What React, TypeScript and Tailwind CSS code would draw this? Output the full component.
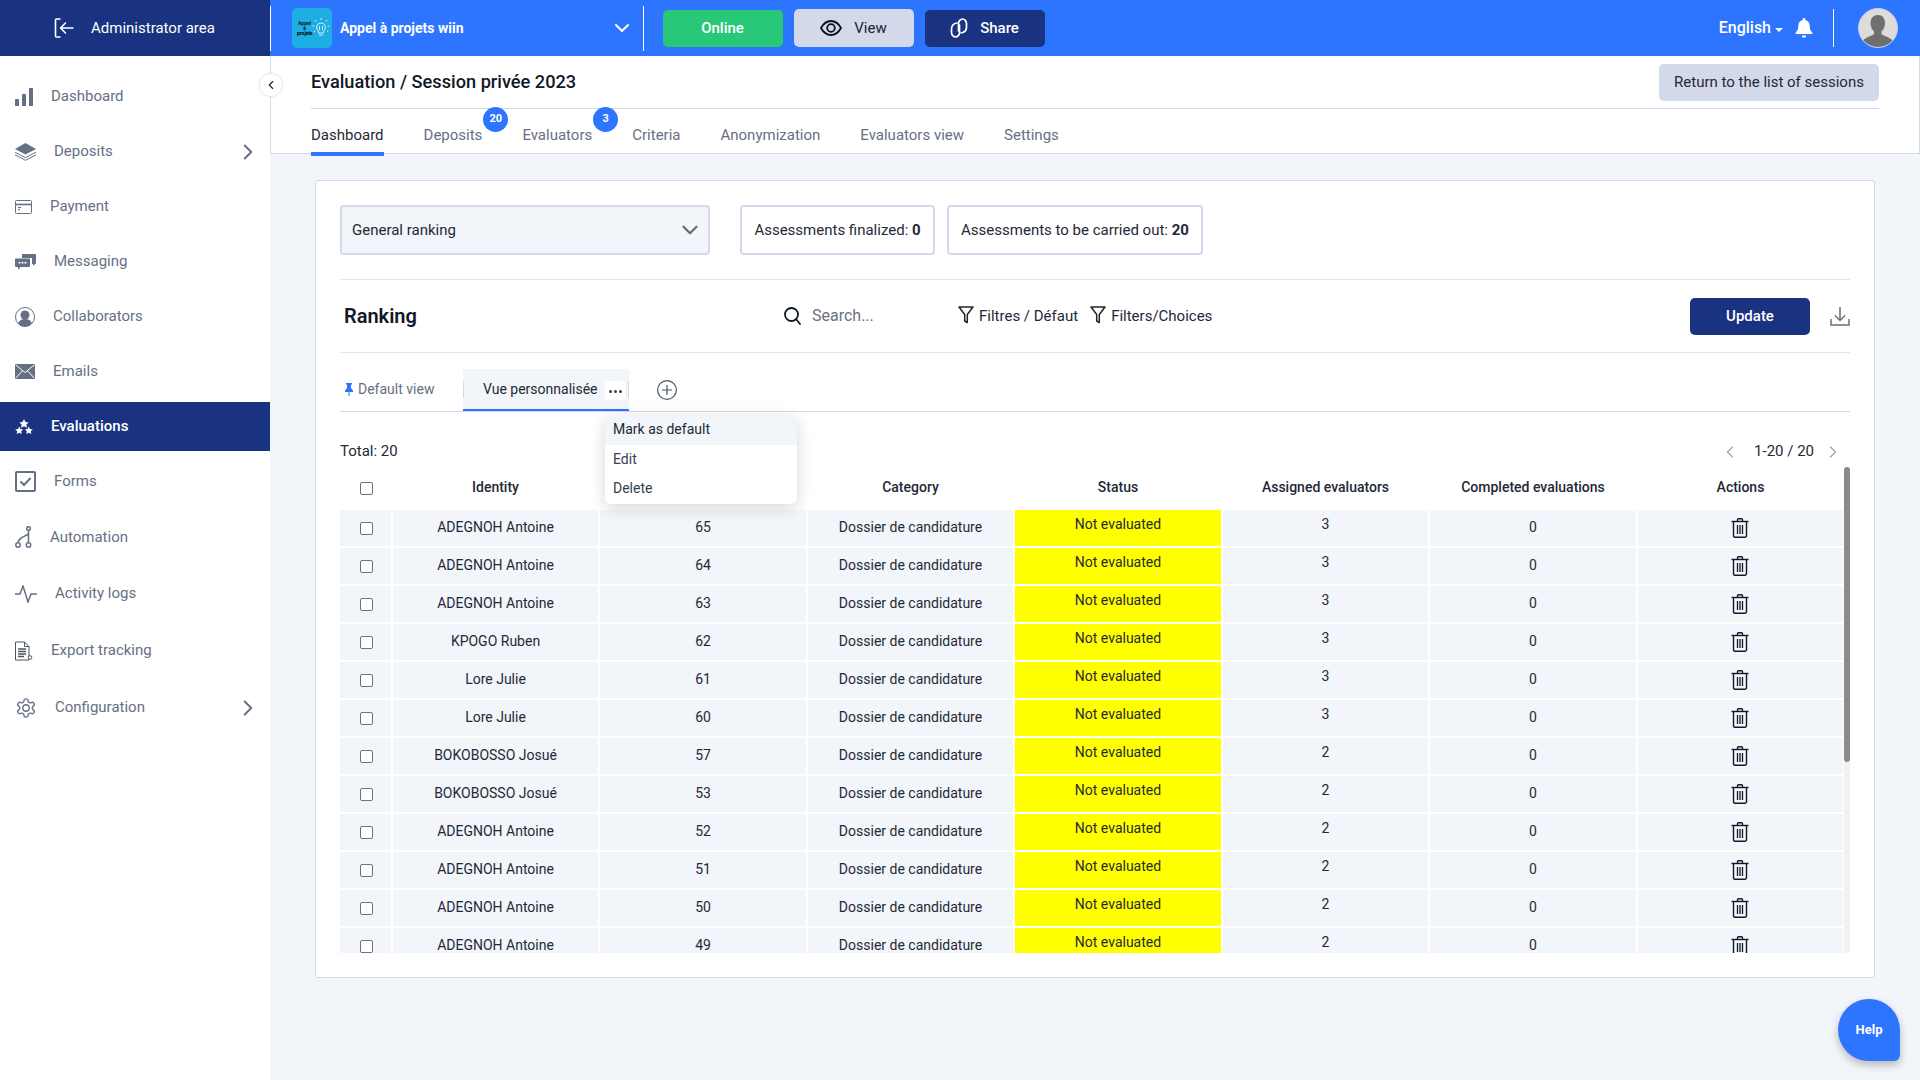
import type { ReactNode } from "react";
import { ChevronDown, ChevronLeft, ChevronRight } from "lucide-react";

const rows = [
  { name: "ADEGNOH Antoine", id: 65, assigned: 3 },
  { name: "ADEGNOH Antoine", id: 64, assigned: 3 },
  { name: "ADEGNOH Antoine", id: 63, assigned: 3 },
  { name: "KPOGO Ruben", id: 62, assigned: 3 },
  { name: "Lore Julie", id: 61, assigned: 3 },
  { name: "Lore Julie", id: 60, assigned: 3 },
  { name: "BOKOBOSSO Josué", id: 57, assigned: 2 },
  { name: "BOKOBOSSO Josué", id: 53, assigned: 2 },
  { name: "ADEGNOH Antoine", id: 52, assigned: 2 },
  { name: "ADEGNOH Antoine", id: 51, assigned: 2 },
  { name: "ADEGNOH Antoine", id: 50, assigned: 2 },
  { name: "ADEGNOH Antoine", id: 49, assigned: 2 },
];

const tabs = ["Dashboard", "Deposits", "Evaluators", "Criteria", "Anonymization", "Evaluators view", "Settings"];
const badges: Record<string, string> = { Deposits: "20", Evaluators: "3" };

function DashboardIcon() {
  return (
    <svg width="18" height="18" viewBox="0 0 18 18" fill="#667085">
      <rect x="0" y="11" width="4" height="7" rx="0.5" />
      <rect x="7" y="6" width="4" height="12" rx="0.5" />
      <rect x="14" y="0" width="4" height="18" rx="0.5" />
    </svg>
  );
}

function DepositsIcon() {
  return (
    <svg width="21" height="18" viewBox="0 0 21 18" fill="#667085">
      <path d="M10.5 0 21 6l-10.5 5.6L0 6z" />
      <path d="M0 9.2l10.5 5.5L21 9.2" fill="none" stroke="#667085" strokeWidth="1" />
      <path d="M0 11.8l10.5 5.5L21 11.8" fill="none" stroke="#667085" strokeWidth="1" />
    </svg>
  );
}

function PaymentIcon() {
  return (
    <svg width="17" height="14" viewBox="0 0 17 14" fill="none" stroke="#667085">
      <rect x="0.5" y="0.5" width="16" height="13" rx="1" />
      <path d="M0.5 4.5h16" strokeWidth="1.6" />
      <path d="M3 7.5h3M3 9.5h2" strokeWidth="1" />
    </svg>
  );
}

function MessagingIcon() {
  return (
    <svg width="21" height="16" viewBox="0 0 21 16" fill="#667085">
      <path d="M7 0h13a1 1 0 0 1 1 1v8a1 1 0 0 1-1 1l-2 2v-2h-1V4H7z" />
      <path d="M1 4.500h13a1 1 0 0 1 1 1v6.500a1 1 0 0 1-1 1H5.500L3 16v-3H1a1 1 0 0 1-1-1V5.500a1 1 0 0 1 1-1z" />
      <circle cx="4.500" cy="8.800" r="1" fill="#fff" />
      <circle cx="7.500" cy="8.800" r="1" fill="#fff" />
      <circle cx="10.500" cy="8.800" r="1" fill="#fff" />
    </svg>
  );
}

function CollaboratorsIcon() {
  return (
    <svg width="20" height="20" viewBox="0 0 20 20">
      <circle cx="10" cy="10" r="9.500" fill="none" stroke="#667085" />
      <circle cx="10" cy="8" r="4.500" fill="#667085" />
      <path d="M3 16.500c1-3.200 3.800-4.500 7-4.500s6 1.300 7 4.500a9.500 9.500 0 0 1-14 0z" fill="#667085" />
    </svg>
  );
}

function EmailsIcon() {
  return (
    <svg width="20" height="15" viewBox="0 0 20 15" fill="#667085">
      <rect width="20" height="15" rx="1" />
      <path d="M0.800 1 10 8.500 19.200 1M0.800 14l6.500-7M19.200 14l-6.500-7" fill="none" stroke="#fff" strokeWidth="1" />
    </svg>
  );
}

function EvaluationsIcon() {
  return (
    <svg width="18" height="16" viewBox="0 0 18 16" fill="#fff">
      <path d="M9 0l1.500 3 3.200.4-2.300 2.200.6 3.100L9 7.200 6 8.700l.6-3.100-2.300-2.200L7.500 3z" />
      <path d="M4.200 7.500l1.200 2.500 2.800.4-2 1.900.5 2.700-2.500-1.300-2.500 1.300.5-2.700-2-1.900 2.800-.4z" />
      <path d="M13.800 7.500l1.200 2.500 2.800.4-2 1.900.5 2.700-2.500-1.300-2.500 1.300.5-2.700-2-1.900 2.800-.4z" />
    </svg>
  );
}

function FormsIcon() {
  return (
    <svg width="21" height="21" viewBox="0 0 21 21" fill="none" stroke="#667085">
      <rect x="1" y="1" width="19" height="19" rx="1" strokeWidth="2" />
      <path d="M5.500 10.500l3.500 3.500 6.500-7" strokeWidth="2" />
    </svg>
  );
}

function AutomationIcon() {
  return (
    <svg width="17" height="22" viewBox="0 0 17 22" fill="none" stroke="#667085" strokeWidth="1.500">
      <circle cx="13.500" cy="2.500" r="1.800" />
      <circle cx="3" cy="19" r="2.200" />
      <circle cx="13.500" cy="19" r="2.200" />
      <path d="M13.500 4.500v12.300M3 16.800c0-4 4-5 10.500-8.800" />
    </svg>
  );
}

function ActivityIcon() {
  return (
    <svg width="22" height="18" viewBox="0 0 22 18" fill="none" stroke="#667085" strokeWidth="1.500">
      <path d="M0 9h5l3-8 5 16 3-8h6" />
    </svg>
  );
}

function ExportIcon() {
  return (
    <svg width="18" height="20" viewBox="0 0 18 20" fill="none" stroke="#4b5563" strokeWidth="1">
      <path d="M0.500 1h9l4.500 4.500V19H0.500z" />
      <path d="M9.500 1v4.500H14" />
      <path d="M3 8h8M3 10.500h8M3 13h8M3 15.500h6" strokeWidth="1.300" />
      <circle cx="15" cy="16.500" r="1.800" fill="#fff" />
    </svg>
  );
}

function ConfigIcon() {
  return (
    <svg width="22" height="22" viewBox="0 0 24 24" fill="none" stroke="#667085" strokeWidth="1.500">
      <path d="M12.220 2h-.44a2 2 0 0 0-2 2v.18a2 2 0 0 1-1 1.730l-.43.250a2 2 0 0 1-2 0l-.150-.080a2 2 0 0 0-2.730.730l-.220.380a2 2 0 0 0 .730 2.730l.150.100a2 2 0 0 1 1 1.720v.510a2 2 0 0 1-1 1.740l-.150.090a2 2 0 0 0-.730 2.730l.220.380a2 2 0 0 0 2.730.730l.150-.080a2 2 0 0 1 2 0l.430.250a2 2 0 0 1 1 1.730V20a2 2 0 0 0 2 2h.440a2 2 0 0 0 2-2v-.180a2 2 0 0 1 1-1.730l.430-.250a2 2 0 0 1 2 0l.150.080a2 2 0 0 0 2.730-.730l.220-.390a2 2 0 0 0-.730-2.730l-.150-.080a2 2 0 0 1-1-1.740v-.500a2 2 0 0 1 1-1.740l.150-.090a2 2 0 0 0 .730-2.730l-.220-.380a2 2 0 0 0-2.730-.730l-.150.080a2 2 0 0 1-2 0l-.430-.250a2 2 0 0 1-1-1.730V4a2 2 0 0 0-2-2z" />
      <circle cx="12" cy="12" r="3.500" />
    </svg>
  );
}

function FilterIcon() {
  return (
    <svg className="mb-[2px]" width="16" height="18" viewBox="0 0 16 18" fill="none" stroke="#212529" strokeWidth="1.500" strokeLinejoin="round">
      <path d="M1 1h14L9.300 8.500v8l-2.600-1.500V8.500z" />
    </svg>
  );
}

function TrashIcon() {
  return (
    <svg width="18" height="20" viewBox="0 0 18 20" fill="none" stroke="#111827" strokeWidth="1.400" className="shrink-0">
      <path d="M0.500 3.500h17" />
      <path d="M6.500 3.500V1.800a1 1 0 0 1 1-1h3a1 1 0 0 1 1 1v1.700" />
      <path d="M2.500 3.500v14.300a1.500 1.500 0 0 0 1.500 1.500h10a1.500 1.500 0 0 0 1.500-1.500V3.500" />
      <path d="M6.500 7v9M9 7v9M11.500 7v9" strokeWidth="1.300" />
    </svg>
  );
}

const navItems: { label: string; icon: ReactNode; height: string; arrow?: boolean; active?: boolean }[] = [
  { label: "Dashboard", icon: <DashboardIcon />, height: "h-[55px]" },
  { label: "Deposits", icon: <DepositsIcon />, height: "h-[55px]", arrow: true },
  { label: "Payment", icon: <PaymentIcon />, height: "h-[55px]" },
  { label: "Messaging", icon: <MessagingIcon />, height: "h-[55px]" },
  { label: "Collaborators", icon: <CollaboratorsIcon />, height: "h-[55px]" },
  { label: "Emails", icon: <EmailsIcon />, height: "h-[55px]" },
  { label: "Evaluations", icon: <EvaluationsIcon />, height: "h-[55px]", active: true },
  { label: "Forms", icon: <FormsIcon />, height: "h-[55px]" },
  { label: "Automation", icon: <AutomationIcon />, height: "h-[56px]" },
  { label: "Activity logs", icon: <ActivityIcon />, height: "h-[57px]" },
  { label: "Export tracking", icon: <ExportIcon />, height: "h-[57px]" },
  { label: "Configuration", icon: <ConfigIcon />, height: "h-[57px]", arrow: true },
];

function Sidebar() {
  return (
    <aside className="w-[270px] shrink-0 bg-white pt-[13px]">
      {navItems.map((item) => (
        <div key={item.label} className={`${item.height} flex items-center`}>
          {item.active ? (
            <div className="flex h-[49px] w-full items-center gap-[18px] bg-[#193380] pl-[15px] text-[15px] font-medium text-white">
              {item.icon}
              <span>{item.label}</span>
            </div>
          ) : (
            <div className="flex w-full items-center gap-[18px] pl-[15px] text-[15px] text-[#667085]">
              {item.icon}
              <span>{item.label}</span>
              {item.arrow && <ChevronRight className="ml-auto mr-[9px] h-[26px] w-[26px]" strokeWidth={1.800} />}
            </div>
          )}
        </div>
      ))}
    </aside>
  );
}

function TopBar() {
  return (
    <header className="flex h-[56px] shrink-0 items-center bg-[#2d75ff] text-white">
      <div className="flex h-full w-[270px] shrink-0 items-center gap-[17px] bg-[#193380] pl-[54px] text-[15px]">
        <svg width="20" height="20" viewBox="0 0 20 20" fill="none" stroke="#fff" strokeWidth="1.600" strokeLinecap="round" strokeLinejoin="round">
          <path d="M6 1H2.500a1 1 0 0 0-1 1v16a1 1 0 0 0 1 1H6" />
          <path d="M19 10H6.500M11.500 5l-5 5 5 5" />
        </svg>
        <span>Administrator area</span>
      </div>
      <div className="h-[45px] w-px bg-white" />
      <div className="ml-[21px] flex h-[40px] w-[40px] shrink-0 items-center rounded-[5px] bg-[#1faee3] pl-[5px]">
        <span className="w-[15px] text-center text-[5px] font-medium leading-[5px] text-black">
          Appel à <b>projets</b>
        </span>
        <svg width="18" height="22" viewBox="0 0 18 22" fill="none" stroke="#fff" strokeWidth="0.800">
          <path d="M9 6a4.500 4.500 0 0 0-2.500 8.200V16h5v-1.800A4.500 4.500 0 0 0 9 6zM7 18h4M7.500 13V9M10.500 13V9" />
          <path d="M9 1v2M3 3l1.200 1.500M15 3l-1.200 1.500M0.500 9h1.800M15.700 9h1.800M1.500 15l1.500-1M16.500 15 15 14" />
        </svg>
      </div>
      <span className="ml-[8px] text-[14px] font-bold">Appel à projets wiin</span>
      <ChevronDown className="ml-[146px] h-[24px] w-[24px]" strokeWidth={2} />
      <div className="ml-[9px] h-[45px] w-px bg-white" />
      <button type="button" className="ml-[19px] h-[37px] w-[120px] rounded-[5px] bg-[#28c878] text-[15px] font-medium text-white">
        Online
      </button>
      <button type="button" className="ml-[11px] flex h-[38px] w-[120px] items-center justify-center gap-[12px] rounded-[5px] bg-[#d3d8ea] text-[15px] text-[#1a2233]">
        <svg width="22" height="16" viewBox="0 0 22 16" fill="none" stroke="#0b0f17" strokeWidth="1.800">
          <path d="M1 8c2.500-4.500 6-7 10-7s7.500 2.500 10 7c-2.500 4.500-6 7-10 7S3.500 12.500 1 8z" />
          <circle cx="11" cy="8" r="3.800" />
        </svg>
        <span>View</span>
      </button>
      <button type="button" className="ml-[11px] flex h-[37px] w-[120px] items-center justify-center gap-[12px] rounded-[5px] bg-[#193380] text-[15px] font-medium text-white">
        <svg width="18" height="20" viewBox="0 0 18 20" fill="none" stroke="#fff" strokeWidth="1.700" strokeLinecap="round">
          <path d="M7 5C3.500 5.500 1.500 8 1.500 11v3.500c0 2.500 2 4.500 4 4.500s4-2 4-4.500V7" />
          <path d="M8.500 13V5.500c0-2.500 2-4.500 4-4.500s4 2 4 4.500V9c0 3-2 5.500-5.500 6" />
        </svg>
        <span>Share</span>
      </button>
      <div className="ml-auto flex items-center">
        <span className="text-[16px] font-medium">English</span>
        <span className="ml-[4px] mt-[3px] h-0 w-0 border-x-[4px] border-t-[4px] border-x-transparent border-t-white" />
        <svg className="ml-[12px]" width="18" height="20" viewBox="0 0 18 20" fill="#fff">
          <path d="M9 0a1.300 1.300 0 0 1 1.300 1.300v.6c2.800.6 4.400 2.900 4.400 5.800 0 3.800 1 5.300 2.800 7.300v1H.5v-1c1.800-2 2.800-3.500 2.800-7.300 0-2.900 1.600-5.200 4.400-5.800v-.6A1.300 1.300 0 0 1 9 0z" />
          <path d="M6.800 17.500h4.400a2.200 2.200 0 0 1-4.400 0z" />
        </svg>
        <div className="ml-[20px] h-[38px] w-px bg-white" />
        <div className="ml-[24px] mr-[22px] flex h-[40px] w-[40px] items-end justify-center overflow-hidden rounded-full border border-[#c6d0ee] bg-[#dcdcdc]">
          <svg width="32" height="33" viewBox="0 0 32 33" fill="#6f6f6f">
            <path d="M16 1c4.500 0 7 3.500 7 8 0 3.500-1.500 7-3.500 8.500V20c1 1.500 8 3 11 6.500V33H1v-6.500c3-3.500 10-5 11-6.500v-2.500C10 16 8.500 12.500 8.500 9c0-4.500 3-8 7.500-8z" />
          </svg>
        </div>
      </div>
    </header>
  );
}

function SubHeader() {
  return (
    <div className="relative h-[98px] shrink-0 border-b border-l border-r border-[#d3d8ea] bg-white pl-[40px] pr-[40px]">
      <button type="button" className="absolute left-[-11px] top-[18px] flex h-[22px] w-[22px] items-center justify-center rounded-full bg-white shadow-[0_0_3px_rgba(0,0,0,0.2)]">
        <ChevronLeft className="h-[14px] w-[14px] text-[#1f2937]" strokeWidth={2} />
      </button>
      <div className="flex h-[53px] items-center justify-between border-b border-[#d3d8ea]">
        <h1 className="pb-[1px] text-[18.200px] font-medium text-[#111827]">Evaluation / Session privée 2023</h1>
        <button type="button" className="h-[37px] w-[220px] rounded-[5px] bg-[#d3d8ea] text-[15px] text-[#1f2937]">
          Return to the list of sessions
        </button>
      </div>
      <nav className="flex h-[44px] gap-[40px] text-[15px] text-[#667085]">
        {tabs.map((tab, i) => (
          <div key={tab} className={`relative flex h-[47px] items-center border-b-[4px] pt-[9px] ${i === 0 ? "border-[#2d75ff] text-[#1f2937]" : "border-transparent"}`}>
            {tab}
            {badges[tab] && (
              <span className="absolute right-[-26px] top-[-2px] flex h-[25px] w-[25px] items-center justify-center rounded-full bg-[#2d75ff] text-[11px] font-bold text-white">
                {badges[tab]}
              </span>
            )}
          </div>
        ))}
      </nav>
    </div>
  );
}

function ViewTabs() {
  return (
    <div className="relative mt-[16px] flex h-[43px] items-start border-b border-[#d3d8ea] text-[14px]">
      <div className="flex h-[42px] w-[123px] items-center gap-[5px] pl-[5px] pb-[1px] text-[#667085]">
        <svg width="8" height="13" viewBox="0 0 8 13" fill="#2d75ff">
          <path d="M1 0h6v1.500H6V5l2 2.500V9H4.500v4h-1V9H0V7.500L2 5V1.500H1z" />
        </svg>
        <span>Default view</span>
      </div>
      <div className="relative flex h-[42px] w-[166px] items-center border-b-[2px] border-[#2d75ff] bg-[#f2f5f9] pl-[20px] text-[#1f2937]">
        <span>Vue personnalisée</span>
        <span className="absolute left-[142px] top-[12px] flex h-[19px] w-[20px] items-center justify-center gap-[2px] rounded-[3px] bg-white pt-[2px]">
          <i className="h-[3px] w-[3px] rounded-full bg-[#374151]" />
          <i className="h-[3px] w-[3px] rounded-full bg-[#374151]" />
          <i className="h-[3px] w-[3px] rounded-full bg-[#374151]" />
        </span>
        <span className="absolute left-0 top-[12px] h-[17px] w-px bg-[#d3d8ea]" />
        <span className="absolute right-0 top-[12px] h-[17px] w-px bg-[#d3d8ea]" />
      </div>
      <svg className="ml-[28px] mt-[11px]" width="20" height="20" viewBox="0 0 20 20" fill="none" stroke="#4b5563" strokeWidth="1.200">
        <circle cx="10" cy="10" r="9.400" />
        <path d="M10 5v10M5 10h10" />
      </svg>
      <div className="absolute left-[265px] top-[46px] z-10 h-[89px] w-[192px] overflow-hidden rounded-[6px] bg-white text-[14px] text-[#374151] shadow-[0_4px_16px_rgba(0,0,0,0.16)]">
        <div className="flex h-[30px] items-center bg-[#f2f5f9] pb-[1px] pl-[8px] text-[#1f2937]">Mark as default</div>
        <div className="flex h-[29px] items-center pl-[8px]">Edit</div>
        <div className="flex h-[29px] items-center pl-[8px]">Delete</div>
      </div>
    </div>
  );
}

function Checkbox() {
  return <input type="checkbox" readOnly className="h-[13px] w-[13px] appearance-none rounded-[2px] border border-[#6b7280] bg-white" />;
}

function RankingTable() {
  const cell = "flex items-center justify-center bg-[#f2f5f9] pb-[1px]";
  return (
    <div className="flex h-[486px]">
      <div className="w-[1503px] overflow-hidden text-[14px] text-[#1f2937]">
        <div className="grid h-[43px] grid-cols-[51px_205px_206px_205px_206px_205px_206px_205px] gap-x-[2px] font-medium">
          <div className="flex items-center justify-center pl-[1px]">
            <Checkbox />
          </div>
          {["Identity", "", "Category", "Status", "Assigned evaluators", "Completed evaluations", "Actions"].map((h, i) => (
            <div key={i} className="flex items-center justify-center pb-[3px]">
              {h}
            </div>
          ))}
        </div>
        <div className="grid auto-rows-[36px] grid-cols-[51px_205px_206px_205px_206px_205px_206px_205px] gap-x-[2px] gap-y-[2px]">
          {rows.map((row) => (
            <div key={row.id} className="contents">
              <div className="flex items-center justify-center bg-[#f2f5f9] pl-[1px]">
                <Checkbox />
              </div>
              <div className={cell}>{row.name}</div>
              <div className={cell}>{row.id}</div>
              <div className={cell}>Dossier de candidature</div>
              <div className="flex items-center justify-center bg-[#ffff00] pb-[7px]">Not evaluated</div>
              <div className="flex items-center justify-center bg-[#f2f5f9] pb-[7px]">{row.assigned}</div>
              <div className={cell}>0</div>
              <div className="flex items-center justify-center bg-[#f2f5f9] pr-[2px]">
                <TrashIcon />
              </div>
            </div>
          ))}
        </div>
      </div>
      <div className="ml-[1px] w-[6px] rounded-[3px] bg-[#f1f1f1]">
        <div className="h-[295px] rounded-[3px] bg-[#8b8b8b]" />
      </div>
    </div>
  );
}

export default function App() {
  return (
    <div className="relative flex h-[1080px] w-[1920px] flex-col overflow-hidden bg-[#f2f5f9] font-['Roboto',sans-serif]">
      <TopBar />
      <div className="flex flex-1">
        <Sidebar />
        <main className="flex flex-1 flex-col">
          <SubHeader />
          <section className="mx-[45px] mt-[26px] h-[798px] rounded-[3px] border border-[#d3d8ea] bg-white px-[24px] pt-[24px]">
            <div className="flex items-center text-[15px] text-[#1f2937]">
              <div className="flex h-[50px] w-[370px] items-center justify-between rounded-[4px] border-2 border-[#d3d8ea] bg-[#f2f5f9] pl-[10px] pr-[5px]">
                <span>General ranking</span>
                <ChevronDown className="h-[26px] w-[26px] text-[#5f6f66]" strokeWidth={2} />
              </div>
              <div className="ml-[30px] flex h-[50px] w-[195px] items-center justify-center rounded-[4px] border-2 border-[#d3d8ea]">
                Assessments finalized:&nbsp;<b className="font-bold">0</b>
              </div>
              <div className="ml-[12px] flex h-[50px] w-[256px] items-center justify-center rounded-[4px] border-2 border-[#d3d8ea]">
                Assessments to be carried out:&nbsp;<b className="font-bold">20</b>
              </div>
            </div>

            <div className="mt-[24px] flex h-[74px] items-center border-y border-[#e5e7eb] pl-[4px]">
              <h2 className="w-[440px] pb-[1px] text-[20px] font-semibold text-[#111827]">Ranking</h2>
              <svg width="17" height="18" viewBox="0 0 17 18" fill="none" stroke="#111827" strokeWidth="1.800" strokeLinecap="round">
                <circle cx="7.500" cy="7.500" r="6.500" />
                <path d="M12 12l4 5" />
              </svg>
              <span className="ml-[11px] w-[146px] text-[16px] text-[#6b7280]">Search...</span>
              <FilterIcon />
              <span className="ml-[5px] text-[15px] text-[#1f2937]">Filtres / Défaut</span>
              <span className="ml-[12px]">
                <FilterIcon />
              </span>
              <span className="ml-[5px] text-[15px] text-[#1f2937]">Filters/Choices</span>
              <button type="button" className="ml-auto h-[37px] w-[120px] rounded-[5px] bg-[#193380] text-[15px] font-medium text-white">
                Update
              </button>
              <svg className="ml-[20px]" width="20" height="20" viewBox="0 0 20 20" fill="none" stroke="#667085" strokeWidth="1.500">
                <path d="M10 1v13M5 9.500l5 5 5-5M1 13v6h18v-6" />
              </svg>
            </div>

            <ViewTabs />

            <div className="mt-[24px] flex h-[31px] items-center justify-between text-[15px] text-[#1f2937]">
              <span>Total: 20</span>
              <div className="flex items-center">
                <ChevronLeft className="h-[20px] w-[20px] text-[#9ca3af]" strokeWidth={1.500} />
                <span className="ml-[14px] mr-[9px]">1-20 / 20</span>
                <ChevronRight className="mr-[7px] h-[20px] w-[20px] text-[#9ca3af]" strokeWidth={1.500} />
              </div>
            </div>

            <RankingTable />
          </section>
        </main>
      </div>
      <button type="button" className="absolute left-[1838px] top-[999px] h-[62px] w-[62px] rounded-[31px_31px_6px_31px] bg-[#2d75ff] text-[13px] font-bold text-white shadow-[0_4px_8px_rgba(0,0,0,0.25)]">
        Help
      </button>
    </div>
  );
}
